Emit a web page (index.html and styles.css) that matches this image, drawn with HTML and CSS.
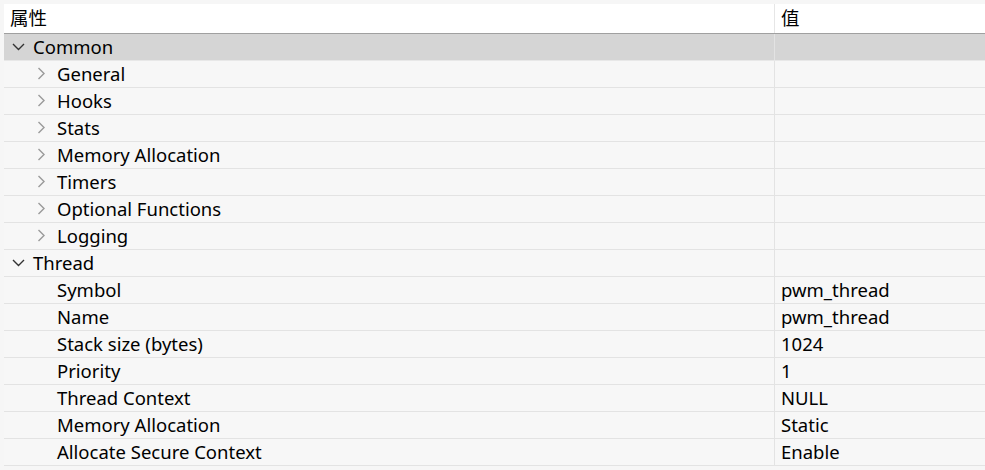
FILE: index.html
```html
<!DOCTYPE html>
<html lang="zh">
<head>
<meta charset="utf-8">
<link rel="stylesheet" href="styles.css">
</head>
<body>
<div class="tree">
  <div class="head">
    <div class="cell name">属性</div>
    <div class="cell val">值</div>
  </div>
  <div class="row sel">
    <div class="cell name l0"><span class="tw open"><svg viewBox="0 0 14 14"><path d="M1 4 L6.5 9.5 L12 4"/></svg></span>Common</div>
    <div class="cell val"></div>
  </div>
  <div class="row"><div class="cell name l1"><span class="tw closed"><svg viewBox="0 0 14 14"><path d="M3.5 1 L9 6.5 L3.5 12"/></svg></span>General</div><div class="cell val"></div></div>
  <div class="row"><div class="cell name l1"><span class="tw closed"><svg viewBox="0 0 14 14"><path d="M3.5 1 L9 6.5 L3.5 12"/></svg></span>Hooks</div><div class="cell val"></div></div>
  <div class="row"><div class="cell name l1"><span class="tw closed"><svg viewBox="0 0 14 14"><path d="M3.5 1 L9 6.5 L3.5 12"/></svg></span>Stats</div><div class="cell val"></div></div>
  <div class="row"><div class="cell name l1"><span class="tw closed"><svg viewBox="0 0 14 14"><path d="M3.5 1 L9 6.5 L3.5 12"/></svg></span>Memory Allocation</div><div class="cell val"></div></div>
  <div class="row"><div class="cell name l1"><span class="tw closed"><svg viewBox="0 0 14 14"><path d="M3.5 1 L9 6.5 L3.5 12"/></svg></span>Timers</div><div class="cell val"></div></div>
  <div class="row"><div class="cell name l1"><span class="tw closed"><svg viewBox="0 0 14 14"><path d="M3.5 1 L9 6.5 L3.5 12"/></svg></span>Optional Functions</div><div class="cell val"></div></div>
  <div class="row"><div class="cell name l1"><span class="tw closed"><svg viewBox="0 0 14 14"><path d="M3.5 1 L9 6.5 L3.5 12"/></svg></span>Logging</div><div class="cell val"></div></div>
  <div class="row">
    <div class="cell name l0"><span class="tw open"><svg viewBox="0 0 14 14"><path d="M1 4 L6.5 9.5 L12 4"/></svg></span>Thread</div>
    <div class="cell val"></div>
  </div>
  <div class="row"><div class="cell name l1"><span class="tw"></span>Symbol</div><div class="cell val">pwm_thread</div></div>
  <div class="row"><div class="cell name l1"><span class="tw"></span>Name</div><div class="cell val">pwm_thread</div></div>
  <div class="row"><div class="cell name l1"><span class="tw"></span>Stack size (bytes)</div><div class="cell val">1024</div></div>
  <div class="row"><div class="cell name l1"><span class="tw"></span>Priority</div><div class="cell val">1</div></div>
  <div class="row"><div class="cell name l1"><span class="tw"></span>Thread Context</div><div class="cell val">NULL</div></div>
  <div class="row"><div class="cell name l1"><span class="tw"></span>Memory Allocation</div><div class="cell val">Static</div></div>
  <div class="row"><div class="cell name l1"><span class="tw"></span>Allocate Secure Context</div><div class="cell val">Enable</div></div>
</div>
</body>
</html>
```
FILE: styles.css
```css
html, body {
  margin: 0;
  padding: 0;
  background: #f6f6f6;
}
body {
  padding: 4px 0 0 4px;
  font-family: "Noto Sans", "Noto Sans CJK SC", sans-serif;
  font-size: 18.5px;
  color: #000;
}
.tree {
  display: flex;
  flex-direction: column;
}
.head, .row {
  display: grid;
  grid-template-columns: 771px 1fr;
}
.head {
  height: 29px;
  background: #fff;
  border-bottom: 1px solid #a0a0a0;
}
.row {
  height: 26px;
  background: #f7f7f7;
  border-bottom: 1px solid #e3e3e3;
}
.row.sel {
  background: #d5d5d5;
  border-bottom-color: #e8e8e8;
}
.cell {
  display: flex;
  align-items: center;
  white-space: nowrap;
  line-height: 1;
}
.head .name { padding-left: 6px; }
.name { border-right: 1px solid #e3e3e3; }
.head .name { border-right-color: #e6e6e6; }
.val { padding-left: 6px; }
.l0 { padding-left: 5px; }
.l1 { padding-left: 29px; }
.tw {
  width: 24px;
  height: 14px;
  display: inline-flex;
  align-items: center;
  flex: none;
}
.tw svg {
  width: 14px;
  height: 14px;
  fill: none;
  stroke-width: 1.4;
}
.tw.open svg { stroke: #333; margin-left: 3px; }
.tw.closed svg { stroke: #9a9a9a; margin-left: 2px; }
```
